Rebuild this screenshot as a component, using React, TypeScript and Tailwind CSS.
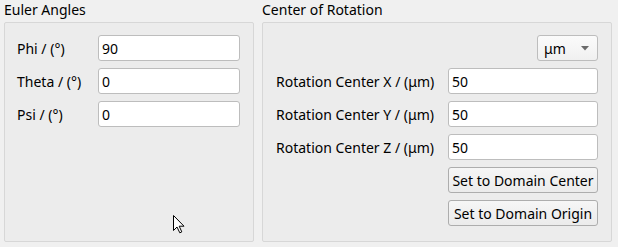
import React from "react";

const font = { fontFamily: '"Segoe UI", "Noto Sans", "Open Sans", sans-serif' };

function Input({ value }: { value: string }) {
  return (
    <div className="h-[26px] bg-white border border-[#bdbdbd] rounded-[3px] flex items-center px-[3px] text-[14px] text-black">
      {value}
    </div>
  );
}

function Button({ label }: { label: string }) {
  return (
    <div className="h-[26px] w-[150px] border border-[#adadad] rounded-[3px] bg-gradient-to-b from-[#f6f6f6] to-[#ebebeb] flex items-center justify-center text-[14px] text-black">
      {label}
    </div>
  );
}

export default function App() {
  return (
    <div className="w-[618px] h-[247px] bg-[#f0f0f0] relative overflow-hidden" style={font}>
      <div className="flex h-full pl-[4px] pr-[6px] pb-[5px] gap-[8px]">
        <div className="w-[250px] flex flex-col">
          <div className="h-[22px] text-[14px] text-black leading-[20px]">Euler Angles</div>
          <div className="flex-1 border border-[#d7d7d7] rounded-[2px] bg-[#ececec] pt-[12px] pl-[12px] pr-[12px]">
            <div className="grid grid-cols-[81px_142px] gap-y-[7px] items-center">
              <div className="text-[14px] text-black">Phi / (°)</div>
              <Input value="90" />
              <div className="text-[14px] text-black">Theta / (°)</div>
              <Input value="0" />
              <div className="text-[14px] text-black">Psi / (°)</div>
              <Input value="0" />
            </div>
          </div>
        </div>
        <div className="w-[350px] flex flex-col">
          <div className="h-[22px] text-[14px] text-black leading-[20px]">Center of Rotation</div>
          <div className="flex-1 border border-[#d7d7d7] rounded-[2px] bg-[#ececec] pt-[12px] pl-[13px] pr-[13px]">
            <div className="grid grid-cols-[172px_150px] gap-y-[7px] items-center">
              <div />
              <div className="flex justify-end">
                <div className="h-[26px] w-[61px] border border-[#bdbdbd] rounded-[3px] bg-gradient-to-b from-[#fbfbfb] to-[#f0f0f0] flex items-center justify-between pl-[6px] pr-[8px] text-[14px] text-black">
                  <span>μm</span>
                  <svg width="8" height="5" viewBox="0 0 8 5">
                    <path d="M0 0 L8 0 L4 4.5 Z" fill="#6b6b6b" />
                  </svg>
                </div>
              </div>
              <div className="text-[14px] text-black">Rotation Center X / (μm)</div>
              <Input value="50" />
              <div className="text-[14px] text-black">Rotation Center Y / (μm)</div>
              <Input value="50" />
              <div className="text-[14px] text-black">Rotation Center Z / (μm)</div>
              <Input value="50" />
              <div />
              <Button label="Set to Domain Center" />
              <div />
              <Button label="Set to Domain Origin" />
            </div>
          </div>
        </div>
      </div>
      <svg className="absolute left-[173px] top-[215px]" width="13" height="19" viewBox="0 0 13 19">
        <path d="M0.5 0.5 L0.5 15.5 L4 12 L6.8 17.8 L8.8 16.9 L6.2 11.2 L11 11.2 Z" fill="white" stroke="black" strokeWidth="1" strokeLinejoin="miter" />
      </svg>
    </div>
  );
}
